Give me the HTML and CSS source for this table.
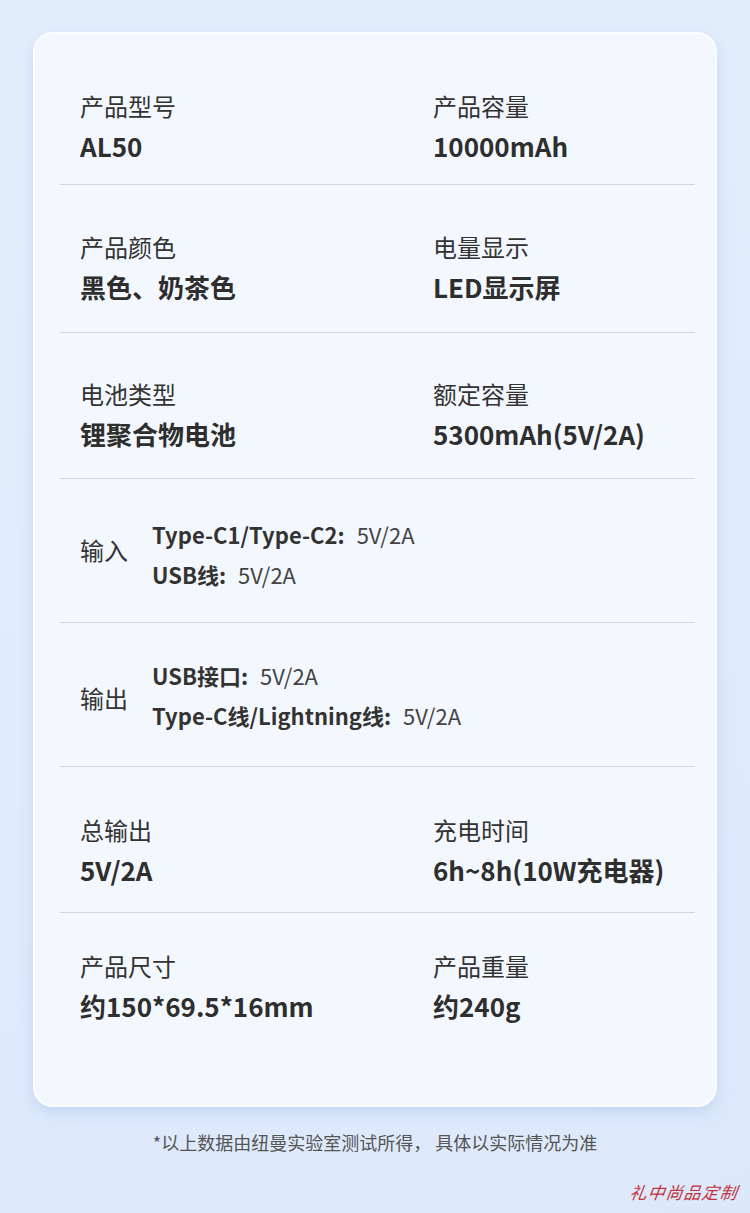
FILE: index.html
```html
<!DOCTYPE html>
<html lang="zh-CN">
<head>
  <meta charset="UTF-8">
  <title>产品参数</title>
  <link rel="stylesheet" href="styles.css">
</head>
<body>
  <div class="page">
    <div class="card">
      <!-- 型号 / 容量 -->
      <div class="row pair row-1">
        <div class="cell">
          <div class="label">产品型号</div>
          <div class="value">AL50</div>
        </div>
        <div class="cell">
          <div class="label">产品容量</div>
          <div class="value">10000mAh</div>
        </div>
      </div>

      <div class="row pair row-2">
        <div class="cell">
          <div class="label">产品颜色</div>
          <div class="value">黑色、奶茶色</div>
        </div>
        <div class="cell">
          <div class="label">电量显示</div>
          <div class="value">LED显示屏</div>
        </div>
      </div>

      <div class="row pair row-3">
        <div class="cell">
          <div class="label">电池类型</div>
          <div class="value">锂聚合物电池</div>
        </div>
        <div class="cell">
          <div class="label">额定容量</div>
          <div class="value">5300mAh(5V/2A)</div>
        </div>
      </div>

      <!-- 输入 / 输出 -->
      <div class="row list row-4">
        <div class="label side">输入</div>
        <div class="lines">
          <p><b>Type-C1/Type-C2:</b>5V/2A</p>
          <p><b>USB线:</b>5V/2A</p>
        </div>
      </div>

      <div class="row list row-5">
        <div class="label side">输出</div>
        <div class="lines">
          <p><b>USB接口:</b>5V/2A</p>
          <p><b>Type-C线/Lightning线:</b>5V/2A</p>
        </div>
      </div>

      <div class="row pair row-6">
        <div class="cell">
          <div class="label">总输出</div>
          <div class="value">5V/2A</div>
        </div>
        <div class="cell">
          <div class="label">充电时间</div>
          <div class="value">6h~8h(10W充电器)</div>
        </div>
      </div>

      <div class="row pair row-7">
        <div class="cell">
          <div class="label">产品尺寸</div>
          <div class="value">约150*69.5*16mm</div>
        </div>
        <div class="cell">
          <div class="label">产品重量</div>
          <div class="value">约240g</div>
        </div>
      </div>
    </div>

    <p class="note">*以上数据由纽曼实验室测试所得， 具体以实际情况为准</p>
    <div class="stamp">礼中尚品定制</div>
  </div>
</body>
</html>
```

FILE: styles.css
```css
* {
  box-sizing: border-box;
}
body {
  margin: 0;
  background: #deebfb;
  font-family: "Noto Sans CJK SC", "Noto Sans", sans-serif;
  color: #333;
}
.page {
  position: relative;
  width: 750px;
  height: 1213px;
  padding-top: 32px;
  background: linear-gradient(160deg, #e3eefc 0%, #dde9fb 100%);
}
.card {
  width: 684px;
  height: 1075px;
  margin-left: 33px;
  background: #f3f8fe;
  border: 2px solid #fbfdff;
  border-radius: 20px;
  box-shadow: 0 6px 14px rgba(150, 180, 225, 0.35);
}
.row {
  margin: 0 20px 0 25px;
  border-bottom: 1px solid #d3d7dd;
}
.pair {
  display: grid;
  grid-template-columns: 353px 1fr;
}
.cell {
  padding-left: 20px;
}
.label {
  font-size: 24px;
  line-height: 38px;
  color: #333;
}
.value {
  font-size: 26px;
  line-height: 42px;
  font-weight: bold;
  color: #2e2e2e;
}
.row-1 {
  height: 151px;
  padding-top: 53px;
}
.row-2 {
  height: 148px;
  padding-top: 43px;
}
.row-3 {
  height: 146px;
  padding-top: 42px;
}
.list {
  display: flex;
  align-items: center;
  padding-left: 20px;
  height: 144px;
}
.side {
  width: 72px;
}
.row-4 .lines {
  margin-top: 6px;
}
.row-4 .side {
  margin-bottom: 2px;
}
.row-5 .side {
  margin-top: 6px;
}
.lines p {
  margin: 0;
  font-size: 22px;
  line-height: 40px;
  color: #444;
}
.lines b {
  margin-right: 12px;
  color: #333;
}
.row-6 {
  height: 146px;
  padding-top: 44px;
}
.row-7 {
  border-bottom: none;
  padding-top: 34px;
}
.note {
  margin: 22px 0 0;
  text-align: center;
  font-size: 18px;
  line-height: 26px;
  color: #555;
}
.stamp {
  position: absolute;
  right: 12px;
  bottom: 9px;
  font-size: 17px;
  font-style: italic;
  letter-spacing: 1px;
  color: #c2323e;
  transform: skewX(-8deg);
}
```
